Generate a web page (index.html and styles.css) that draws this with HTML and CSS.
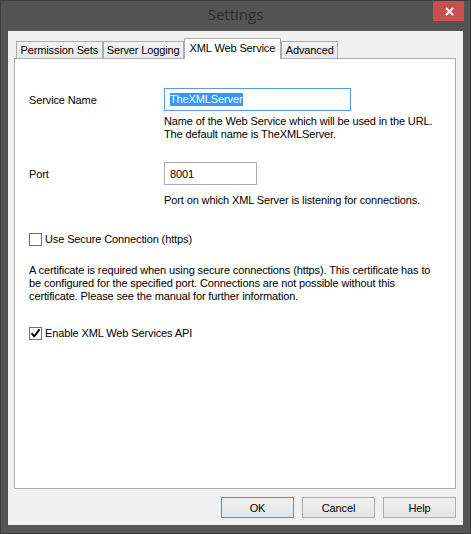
FILE: index.html
```html
<!DOCTYPE html>
<html>
<head>
<meta charset="utf-8">
<title>Settings</title>
<link rel="stylesheet" href="styles.css">
</head>
<body>
<div class="window">
  <div class="titlebar">
    <span class="title">Settings</span>
    <button class="close" aria-label="Close">
      <svg width="9" height="9" viewBox="0 0 9 9"><path d="M1 1L8 8M8 1L1 8" stroke="#fff" stroke-width="2" fill="none"/></svg>
    </button>
  </div>
  <div class="client">
    <div class="tabs">
      <div class="tab">Permission Sets</div>
      <div class="tab tab-narrow">Server Logging</div>
      <div class="tab active">XML Web Service</div>
      <div class="tab">Advanced</div>
    </div>
    <div class="panel">
      <div class="field">
        <span class="label">Service Name</span>
        <div class="input input-name"><span class="sel">TheXMLServer</span></div>
      </div>
      <p class="hint">Name of the Web Service which will be used in the URL.<br>The default name is TheXMLServer.</p>
      <div class="field field-port">
        <span class="label">Port</span>
        <div class="input input-port">8001</div>
      </div>
      <p class="hint hint-port">Port on which XML Server is listening for connections.</p>
      <div class="check check-secure"><span class="box"></span><span>Use Secure Connection (https)</span></div>
      <p class="note">A certificate is required when using secure connections (https). This certificate has to<br>be configured for the specified port. Connections are not possible without this<br>certificate. Please see the manual for further information.</p>
      <div class="check check-api"><span class="box"><svg width="11" height="11" viewBox="0 0 11 11"><path d="M1.5 5.2L4.2 8.3L9.6 1.4" stroke="#000" stroke-width="1.9" fill="none"/></svg></span><span>Enable XML Web Services API</span></div>
    </div>
    <div class="buttons">
      <button class="btn btn-default">OK</button>
      <button class="btn">Cancel</button>
      <button class="btn">Help</button>
    </div>
  </div>
</div>
</body>
</html>
```
FILE: styles.css
```css
html, body {
  margin: 0;
  padding: 0;
}
body {
  background: #545454;
  font-family: "Liberation Sans", Arial, sans-serif;
  font-size: 11px;
  letter-spacing: -0.12px;
  color: #000;
}
.window {
  width: 471px;
  height: 534px;
  box-sizing: border-box;
  border: 1px solid #3d3d3d;
  background: #545454;
  padding: 0 7px 8px 7px;
  display: flex;
  flex-direction: column;
}
.titlebar {
  height: 30px;
  margin: 0 -7px;
  display: grid;
  grid-template-columns: 1fr auto 1fr;
}
.title {
  grid-column: 2;
  font-family: "Open Sans", "Liberation Sans", sans-serif;
  font-size: 15px;
  line-height: 26px;
  letter-spacing: 0;
  color: #2c2c2c;
}
.close {
  grid-column: 3;
  justify-self: end;
  align-self: start;
  width: 31px;
  height: 20px;
  margin-right: 6px;
  padding: 0;
  border: 0;
  background: #c75050;
  display: flex;
  align-items: center;
  justify-content: center;
}
.close svg {
  display: block;
  margin-left: 2px;
  margin-top: 1px;
}
.client {
  flex: 1;
  background: #f0f0f0;
  padding: 7px 7px 7px 6px;
  display: flex;
  flex-direction: column;
}
.tabs {
  display: flex;
  align-items: flex-end;
  height: 21px;
  margin: 0 0 -1px 2px;
  position: relative;
  z-index: 1;
}
.tab {
  box-sizing: border-box;
  height: 17px;
  margin-bottom: 1px;
  border: 1px solid #acacac;
  border-bottom: 0;
  padding: 0 3.5px;
  line-height: 16px;
  white-space: nowrap;
  background: linear-gradient(#f2f2f2, #e8e8e8);
}
.tab-narrow {
  padding: 0 3px;
}
.tab.active {
  height: 21px;
  margin-bottom: 0;
  padding: 0 5px;
  line-height: 18px;
  background: #fff;
}
.panel {
  flex: 1;
  box-sizing: border-box;
  border: 1px solid #acacac;
  background: #fff;
  padding: 29px 14px 0 14px;
}
.field {
  display: grid;
  grid-template-columns: 135px auto;
  justify-content: start;
  align-items: center;
}
.input {
  box-sizing: border-box;
  height: 23px;
  border: 1px solid #abadb3;
  background: #fff;
  padding: 0 5px;
  display: flex;
  align-items: center;
}
.input-name {
  width: 187px;
  border-color: #569de5;
}
.input-port {
  width: 93px;
}
.sel {
  background: #3399ff;
  color: #fff;
  line-height: 13px;
}
.hint {
  margin: 4px 0 0 135px;
  line-height: 13px;
}
.field-port {
  margin-top: 21px;
}
.hint-port {
  margin-top: 9px;
}
.check {
  display: flex;
  align-items: center;
  gap: 3px;
  height: 13px;
  line-height: 13px;
}
.check-secure {
  margin-top: 26px;
}
.check-api {
  margin-top: 24px;
}
.box {
  width: 13px;
  height: 13px;
  box-sizing: border-box;
  border: 1px solid #6f6f6f;
  background: #fff;
  flex: none;
}
.box svg {
  display: block;
}
.note {
  margin: 18px 0 0;
  line-height: 13px;
}
.buttons {
  display: flex;
  justify-content: flex-end;
  gap: 8px;
  margin-top: 8px;
}
.btn {
  width: 73px;
  height: 21px;
  box-sizing: border-box;
  border: 1px solid #acacac;
  background: linear-gradient(#f0f0f0, #e5e5e5);
  font: inherit;
  letter-spacing: inherit;
  color: #000;
  padding: 0;
}
.btn-default {
  border-color: #3c9ae8;
}
```
